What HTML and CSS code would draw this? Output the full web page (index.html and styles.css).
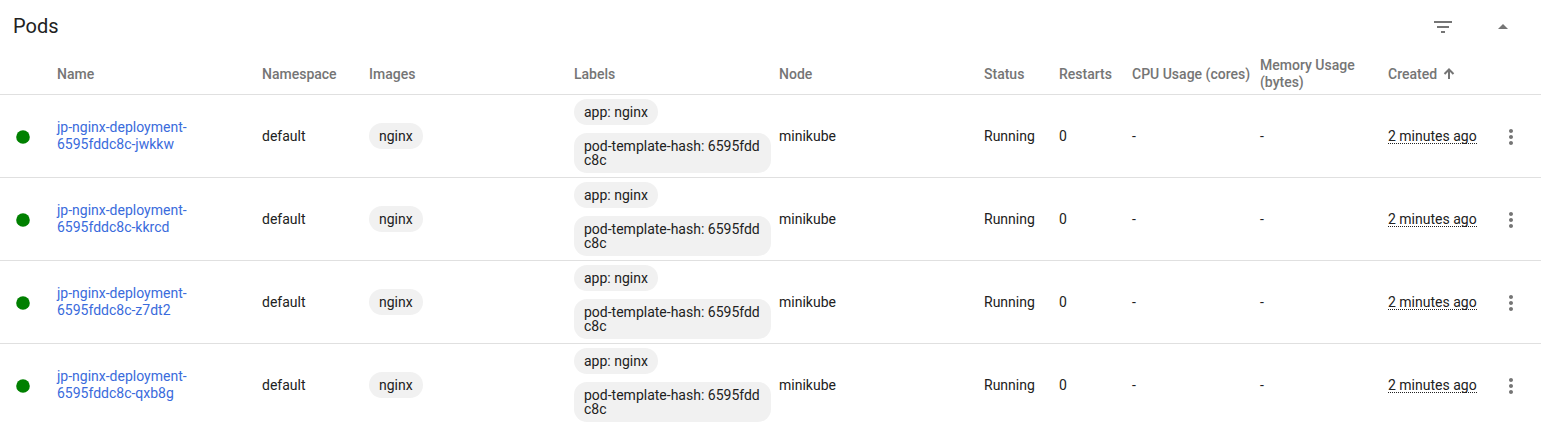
FILE: index.html
```html
<!DOCTYPE html>
<html lang="en">
<head>
<meta charset="utf-8">
<title>Pods</title>
<meta name="viewport" content="width=device-width, initial-scale=1">
<link rel="stylesheet" href="styles.css">
</head>
<body>
<section class="card" aria-labelledby="pods-title">
  <header class="card-header">
    <h2 class="card-title" id="pods-title">Pods</h2>
    <div class="card-actions">
      <button class="icon-button" type="button" aria-label="Filter"><svg class="icon" viewBox="0 0 24 24"><path d="M10 18h4v-2h-4v2zM3 6v2h18V6H3zm3 7h12v-2H6v2z"/></svg></button>
      <button class="icon-button" type="button" aria-label="Collapse"><svg class="icon" viewBox="0 0 24 24"><path d="M7 14l5-5 5 5z"/></svg></button>
    </div>
  </header>
  <table class="pods">
    <colgroup>
      <col class="col-icon"><col><col class="col-namespace"><col><col><col>
      <col class="col-status"><col class="col-restarts"><col class="col-usage"><col class="col-usage">
      <col class="col-created"><col class="col-menu">
    </colgroup>
    <thead>
      <tr>
        <th></th><th>Name</th><th>Namespace</th><th>Images</th><th>Labels</th><th>Node</th>
        <th>Status</th><th>Restarts</th><th class="nowrap">CPU Usage (cores)</th><th>Memory Usage (bytes)</th>
        <th class="nowrap"><button class="sort" type="button">Created <svg class="sort-arrow" viewBox="0 0 12 12"><path d="M6 11V2M1.500 6L6 1.500L10.500 6"/></svg></button></th><th></th>
      </tr>
    </thead>
    <tbody>
      <tr>
        <td class="state"><svg class="dot" viewBox="0 0 14 14"><circle cx="7" cy="7" r="6.800"/></svg></td>
        <td><a class="link" href="#jwkkw">jp-nginx-deployment-6595fddc8c-jwkkw</a></td>
        <td>default</td>
        <td><span class="chip">nginx</span></td>
        <td><div class="chips"><span class="chip">app: nginx</span><span class="chip">pod-template-hash: 6595fddc8c</span></div></td>
        <td>minikube</td><td>Running</td><td>0</td><td>-</td><td>-</td>
        <td class="nowrap"><span class="age">2 minutes ago</span></td>
        <td class="menu"><button class="icon-button" type="button" aria-label="Actions"><svg class="icon" viewBox="0 0 24 24"><path d="M12 8c1.100 0 2-.9 2-2s-.9-2-2-2-2 .9-2 2 .9 2 2 2zm0 2c-1.100 0-2 .9-2 2s.9 2 2 2 2-.9 2-2-.9-2-2-2zm0 6c-1.100 0-2 .9-2 2s.9 2 2 2 2-.9 2-2-.9-2-2-2z"/></svg></button></td>
      </tr>
      <tr>
        <td class="state"><svg class="dot" viewBox="0 0 14 14"><circle cx="7" cy="7" r="6.800"/></svg></td>
        <td><a class="link" href="#kkrcd">jp-nginx-deployment-6595fddc8c-kkrcd</a></td>
        <td>default</td>
        <td><span class="chip">nginx</span></td>
        <td><div class="chips"><span class="chip">app: nginx</span><span class="chip">pod-template-hash: 6595fddc8c</span></div></td>
        <td>minikube</td><td>Running</td><td>0</td><td>-</td><td>-</td>
        <td class="nowrap"><span class="age">2 minutes ago</span></td>
        <td class="menu"><button class="icon-button" type="button" aria-label="Actions"><svg class="icon" viewBox="0 0 24 24"><path d="M12 8c1.100 0 2-.9 2-2s-.9-2-2-2-2 .9-2 2 .9 2 2 2zm0 2c-1.100 0-2 .9-2 2s.9 2 2 2 2-.9 2-2-.9-2-2-2zm0 6c-1.100 0-2 .9-2 2s.9 2 2 2 2-.9 2-2-.9-2-2-2z"/></svg></button></td>
      </tr>
      <tr>
        <td class="state"><svg class="dot" viewBox="0 0 14 14"><circle cx="7" cy="7" r="6.800"/></svg></td>
        <td><a class="link" href="#z7dt2">jp-nginx-deployment-6595fddc8c-z7dt2</a></td>
        <td>default</td>
        <td><span class="chip">nginx</span></td>
        <td><div class="chips"><span class="chip">app: nginx</span><span class="chip">pod-template-hash: 6595fddc8c</span></div></td>
        <td>minikube</td><td>Running</td><td>0</td><td>-</td><td>-</td>
        <td class="nowrap"><span class="age">2 minutes ago</span></td>
        <td class="menu"><button class="icon-button" type="button" aria-label="Actions"><svg class="icon" viewBox="0 0 24 24"><path d="M12 8c1.100 0 2-.9 2-2s-.9-2-2-2-2 .9-2 2 .9 2 2 2zm0 2c-1.100 0-2 .9-2 2s.9 2 2 2 2-.9 2-2-.9-2-2-2zm0 6c-1.100 0-2 .9-2 2s.9 2 2 2 2-.9 2-2-.9-2-2-2z"/></svg></button></td>
      </tr>
      <tr>
        <td class="state"><svg class="dot" viewBox="0 0 14 14"><circle cx="7" cy="7" r="6.800"/></svg></td>
        <td><a class="link" href="#qxb8g">jp-nginx-deployment-6595fddc8c-qxb8g</a></td>
        <td>default</td>
        <td><span class="chip">nginx</span></td>
        <td><div class="chips"><span class="chip">app: nginx</span><span class="chip">pod-template-hash: 6595fddc8c</span></div></td>
        <td>minikube</td><td>Running</td><td>0</td><td>-</td><td>-</td>
        <td class="nowrap"><span class="age">2 minutes ago</span></td>
        <td class="menu"><button class="icon-button" type="button" aria-label="Actions"><svg class="icon" viewBox="0 0 24 24"><path d="M12 8c1.100 0 2-.9 2-2s-.9-2-2-2-2 .9-2 2 .9 2 2 2zm0 2c-1.100 0-2 .9-2 2s.9 2 2 2 2-.9 2-2-.9-2-2-2zm0 6c-1.100 0-2 .9-2 2s.9 2 2 2 2-.9 2-2-.9-2-2-2z"/></svg></button></td>
      </tr>
    </tbody>
  </table>
</section>
</body>
</html>
```
FILE: styles.css
```css
* {
  box-sizing: border-box;
}

body {
  margin: 0;
  background: #fff;
  color: #212121;
  font: 14px/17px Roboto, "Liberation Sans", sans-serif;
}

.card-header {
  display: flex;
  align-items: center;
  justify-content: space-between;
  height: 54px;
  padding: 0 18px 0 13px;
}

.card-title {
  margin: 0;
  padding-bottom: 2px;
  font-size: 20px;
  font-weight: 400;
  line-height: 24px;
}

.card-actions {
  display: flex;
  gap: 20px;
}

.icon-button {
  display: inline-flex;
  align-items: center;
  justify-content: center;
  width: 40px;
  height: 40px;
  padding: 0;
  border: 0;
  background: none;
  color: #757575;
  vertical-align: middle;
  cursor: pointer;
}

.icon {
  width: 24px;
  height: 24px;
  fill: currentColor;
}

.pods {
  width: 100%;
  table-layout: fixed;
  border-collapse: separate;
  border-spacing: 0;
}

.col-icon { width: 57px; }
.col-namespace { width: 107px; }
.col-status { width: 75px; }
.col-restarts { width: 73px; }
.col-usage { width: 128px; }
.col-created { width: 93px; }
.col-menu { width: 60px; }

.pods th,
.pods td {
  padding: 4px 8px 4px 0;
  border-bottom: 1px solid #e0e0e0;
  text-align: left;
  vertical-align: middle;
}

.pods th {
  height: 41px;
  padding-top: 3px;
  padding-bottom: 3px;
  color: #757575;
  font-weight: 500;
}

.pods tbody tr:last-child td {
  border-bottom: 0;
}

.pods .nowrap {
  padding-right: 0;
  white-space: nowrap;
}

.pods .state {
  padding: 2px 0 0 16px;
}

.pods .menu {
  padding: 2px 0 0;
  text-align: center;
}

.dot {
  display: block;
  width: 14px;
  height: 14px;
  fill: #008000;
}

.link {
  color: #3a6bdc;
  text-decoration: none;
}

.chips {
  display: flex;
  flex-direction: column;
  align-items: flex-start;
  gap: 8px;
}

.chip {
  display: inline-block;
  padding: 6px 10px;
  border-radius: 13px;
  background: #f1f1f1;
  line-height: 14px;
  vertical-align: middle;
  word-break: break-all;
}

.sort {
  display: inline-flex;
  align-items: center;
  gap: 6px;
  padding: 0;
  border: 0;
  background: none;
  color: inherit;
  font: inherit;
  cursor: pointer;
}

.sort-arrow {
  width: 12px;
  height: 12px;
  fill: none;
  stroke: currentColor;
  stroke-width: 2;
}

.age {
  display: inline-block;
  border-bottom: 1px dotted #212121;
  line-height: 13px;
}
```
